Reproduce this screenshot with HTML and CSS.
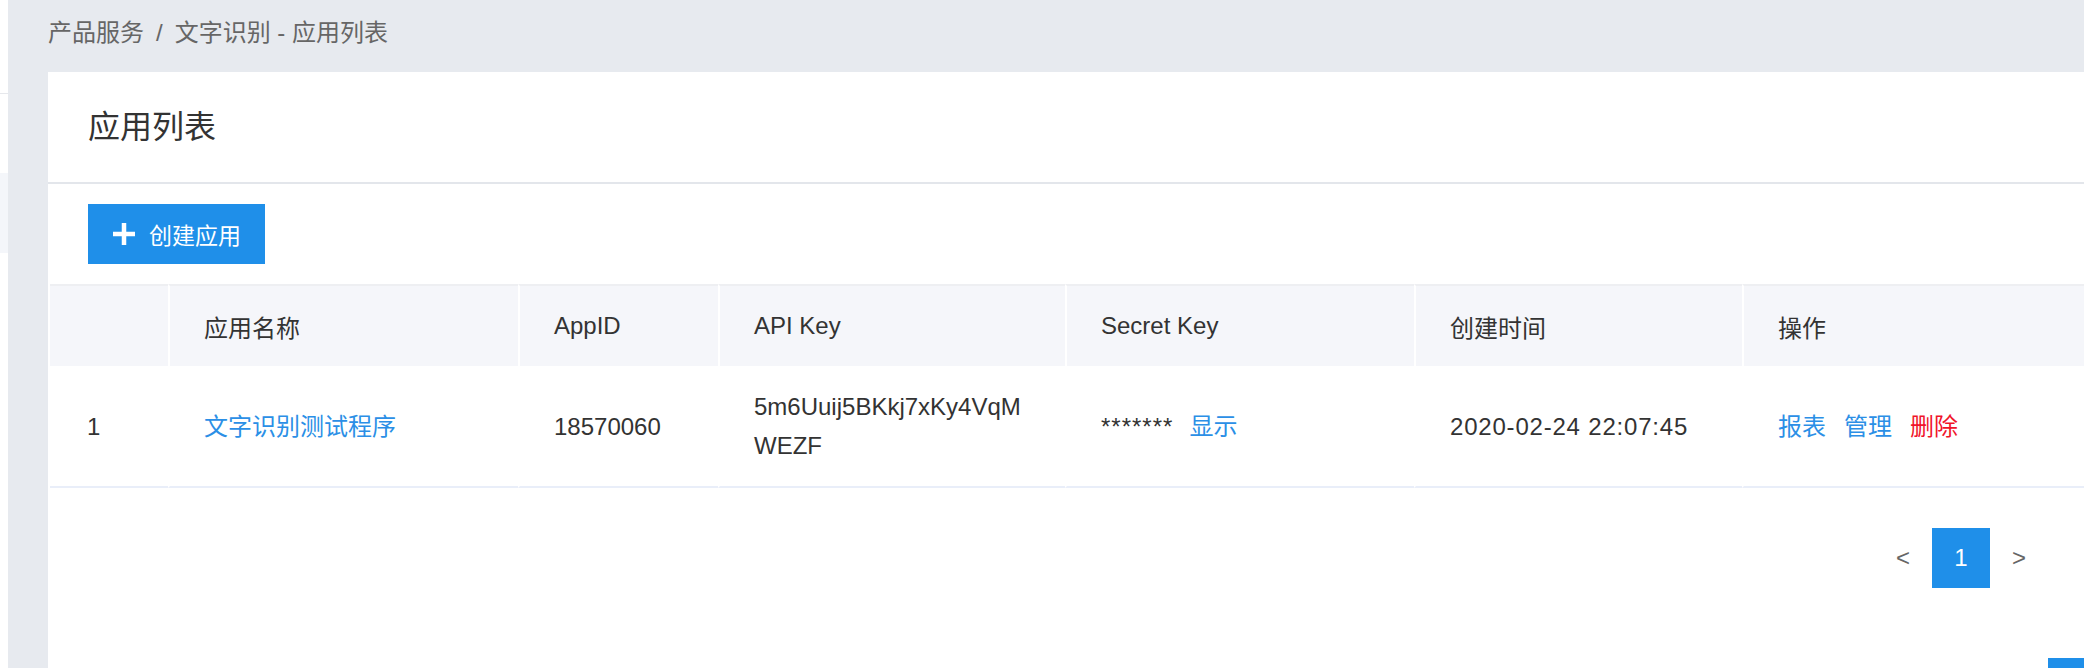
FILE: index.html
```html
<!DOCTYPE html>
<html lang="zh-CN">
<head>
  <meta charset="UTF-8">
  <meta name="viewport" content="width=device-width, initial-scale=1.0">
  <title>应用列表</title>
  <link rel="stylesheet" href="styles.css">
</head>
<body>
  <div class="layout">
    <div class="side">
      <div class="side-line"></div>
      <div class="side-block"></div>
    </div>

    <div class="main">
      <div class="crumbs">
        <span>产品服务</span><span class="sep">/</span><span>文字识别 - 应用列表</span>
      </div>

      <div class="card">
        <div class="card-head">应用列表</div>

        <div class="toolbar">
          <button class="btn-create">
            <svg width="24" height="24" viewBox="0 0 24 24"><path d="M12 1v22M1 12h22" stroke="#fff" stroke-width="4.5" fill="none"/></svg>
            <span>创建应用</span>
          </button>
        </div>

        <table class="app-table">
          <colgroup>
            <col style="width: 118px">
            <col style="width: 350px">
            <col style="width: 200px">
            <col style="width: 347px">
            <col style="width: 349px">
            <col style="width: 328px">
            <col>
          </colgroup>
          <thead>
            <tr>
              <th></th>
              <th>应用名称</th>
              <th>AppID</th>
              <th>API Key</th>
              <th>Secret Key</th>
              <th>创建时间</th>
              <th>操作</th>
            </tr>
          </thead>
          <tbody>
            <tr>
              <td class="num">1</td>
              <td><a class="link">文字识别测试程序</a></td>
              <td>18570060</td>
              <td class="key">5m6Uuij5BKkj7xKy4VqMWEZF</td>
              <td><span class="stars">*******</span><a class="link show">显示</a></td>
              <td class="time">2020-02-24 22:07:45</td>
              <td class="ops"><a class="link">报表</a><a class="link">管理</a><a class="link danger">删除</a></td>
            </tr>
          </tbody>
        </table>

        <div class="pager">
          <span class="pg-arrow">&lt;</span>
          <span class="pg-item active">1</span>
          <span class="pg-arrow">&gt;</span>
        </div>
      </div>
    </div>
  </div>

  <div class="float-btn"></div>
</body>
</html>
```

FILE: styles.css
```css
body {
  margin: 0;
  font-family: "Liberation Sans", "Noto Sans CJK SC", sans-serif;
  color: #333;
  background-color: #fff;
  overflow: hidden;
}
.layout {
  display: flex;
  min-height: 100vh;
}
.side {
  width: 8px;
  flex-shrink: 0;
  background-color: #fff;
}
.side-line {
  margin-top: 93px;
  height: 1px;
  background-color: #e6e8ec;
}
.side-block {
  margin-top: 79px;
  height: 80px;
  background-color: #f4f6fa;
}
.main {
  flex: 1;
  min-width: 0;
  display: flex;
  flex-direction: column;
  padding-left: 40px;
  background-color: #e7eaef;
}
.crumbs {
  box-sizing: border-box;
  height: 72px;
  padding-top: 21px;
  font-size: 24px;
  line-height: 24px;
  color: #666;
}
.crumbs .sep {
  padding: 0 12px;
}
.card {
  flex: 1;
  background-color: #fff;
}
.card-head {
  height: 104px;
  display: flex;
  align-items: center;
  padding: 0 0 6px 40px;
  font-size: 32px;
  color: #333;
  border-bottom: 2px solid #e3e6eb;
}
.toolbar {
  padding: 20px 40px;
}
.btn-create {
  display: flex;
  align-items: center;
  gap: 13px;
  height: 60px;
  padding: 0 24px;
  border: none;
  background-color: #1f8fe9;
  color: #fff;
  font-family: inherit;
  font-size: 23px;
}
.app-table {
  width: calc(100% - 2px);
  margin-left: 2px;
  table-layout: fixed;
  border-collapse: separate;
  border-spacing: 0;
  font-size: 24px;
}
.app-table th {
  height: 80px;
  padding: 0 34px;
  text-align: left;
  font-weight: normal;
  color: #333;
  background-color: #f5f6fa;
  border-top: 2px solid #eeeff2;
  border-left: 2px solid #fff;
}
.app-table th:first-child {
  border-left: none;
}
.app-table td {
  padding: 21px 34px;
  line-height: 39px;
  vertical-align: middle;
  color: #333;
  border-bottom: 2px solid #e9eef9;
  border-left: 2px solid transparent;
}
.app-table td:first-child {
  border-left: none;
}
.app-table td.num {
  padding-left: 37px;
}
.app-table td.key {
  word-break: break-all;
}
.app-table td.time {
  letter-spacing: 0.8px;
}
.stars {
  letter-spacing: 1px;
}
.link {
  color: #2b8fe6;
  cursor: pointer;
}
.link.show {
  margin-left: 16px;
}
.link.danger {
  color: #f0142a;
}
.ops .link {
  margin-right: 18px;
}
.pager {
  display: flex;
  justify-content: flex-end;
  align-items: center;
  gap: 9px;
  padding: 40px 45px 0 0;
}
.pg-arrow {
  width: 40px;
  text-align: center;
  font-size: 24px;
  color: #666;
}
.pg-item {
  width: 58px;
  height: 60px;
  display: flex;
  align-items: center;
  justify-content: center;
  font-size: 24px;
}
.pg-item.active {
  background-color: #1f8fe9;
  color: #fff;
}
.float-btn {
  position: fixed;
  right: 0;
  bottom: 0;
  width: 36px;
  height: 10px;
  background-color: #1f8fe9;
}
```
